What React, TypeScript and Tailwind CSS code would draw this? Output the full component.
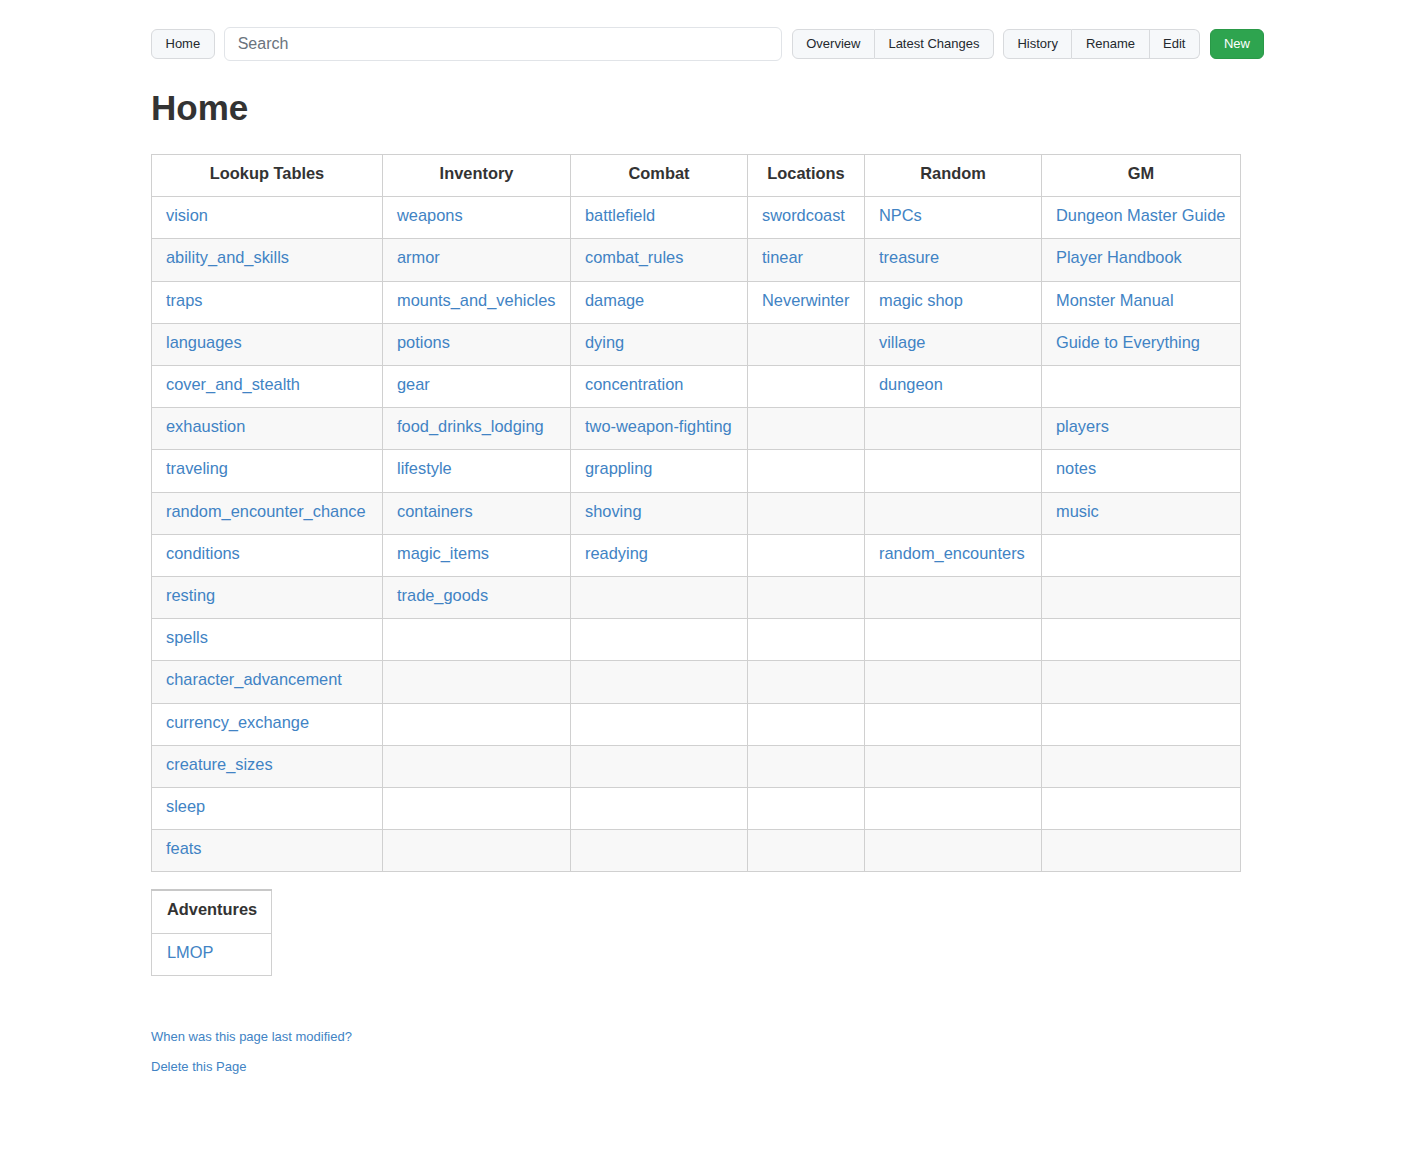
const columns = ["Lookup Tables", "Inventory", "Combat", "Locations", "Random", "GM"];
const widths = ["w-[231px]", "w-[188px]", "w-[177px]", "w-[117px]", "w-[177px]", "w-[199px]"];

const rows: string[][] = [
  ["vision", "weapons", "battlefield", "swordcoast", "NPCs", "Dungeon Master Guide"],
  ["ability_and_skills", "armor", "combat_rules", "tinear", "treasure", "Player Handbook"],
  ["traps", "mounts_and_vehicles", "damage", "Neverwinter", "magic shop", "Monster Manual"],
  ["languages", "potions", "dying", "", "village", "Guide to Everything"],
  ["cover_and_stealth", "gear", "concentration", "", "dungeon", ""],
  ["exhaustion", "food_drinks_lodging", "two-weapon-fighting", "", "", "players"],
  ["traveling", "lifestyle", "grappling", "", "", "notes"],
  ["random_encounter_chance", "containers", "shoving", "", "", "music"],
  ["conditions", "magic_items", "readying", "", "random_encounters", ""],
  ["resting", "trade_goods", "", "", "", ""],
  ["spells", "", "", "", "", ""],
  ["character_advancement", "", "", "", "", ""],
  ["currency_exchange", "", "", "", "", ""],
  ["creature_sizes", "", "", "", "", ""],
  ["sleep", "", "", "", "", ""],
  ["feats", "", "", "", "", ""],
];

const btn =
  "bg-[#f6f8fa] border border-[#d8dadd] text-[13px] leading-5 py-1 px-[13.5px] text-[#24292e]";

const App = () => {
  return (
    <div className="min-h-[1159px] bg-white font-['Liberation_Sans',Arial,sans-serif] text-[#333]">
      <div className="w-[1113px] ml-[151px] pt-[27px]">
        {/* top bar */}
        <div className="flex items-center">
          <button className={`${btn} rounded-md`}>Home</button>
          <div className="flex-1 ml-[9px]">
            <input
              placeholder="Search"
              className="w-full h-[34px] border border-[#e1e4e8] rounded-md px-[13px] text-base leading-5 placeholder:text-[#6a737d] outline-none"
            />
          </div>
          <div className="flex ml-[10px]">
            <button className={`${btn} rounded-l-md`}>Overview</button>
            <button className={`${btn} rounded-r-md border-l-0`}>Latest Changes</button>
          </div>
          <div className="flex ml-[9px]">
            <button className={`${btn} rounded-l-md`}>History</button>
            <button className={`${btn} border-l-0`}>Rename</button>
            <button className={`${btn} rounded-r-md border-l-0`}>Edit</button>
          </div>
          <button className="ml-[10px] bg-[#2ea44f] border border-[#2a9948] text-white text-[13px] leading-5 py-1 px-[13px] rounded-md">
            New
          </button>
        </div>

        <h1 className="mt-[26px] mb-[25px] text-[35px] leading-[42px] font-bold text-[#333]">Home</h1>

        {/* main table */}
        <table className="table-fixed w-[1089px] border-collapse text-[16.4px]">
          <colgroup>
            {widths.map((w, i) => (
              <col key={i} className={w} />
            ))}
          </colgroup>
          <thead>
            <tr>
              {columns.map((c) => (
                <th
                  key={c}
                  className="border border-[#d0d0d0] pt-[6px] pb-[10px] px-[14px] leading-[25.2px] font-bold text-center text-[#333]"
                >
                  {c}
                </th>
              ))}
            </tr>
          </thead>
          <tbody>
            {rows.map((r, i) => (
              <tr key={i} className={i % 2 === 1 ? "bg-[#f8f8f8]" : "bg-white"}>
                {r.map((cell, j) => (
                  <td
                    key={j}
                    className="border border-[#d0d0d0] pt-[6px] pb-[10px] px-[14px] leading-[25.2px] whitespace-nowrap"
                  >
                    {cell && (
                      <a href="#" className="text-[#4183c4]">
                        {cell}
                      </a>
                    )}
                  </td>
                ))}
              </tr>
            ))}
          </tbody>
        </table>

        {/* adventures */}
        <table className="mt-[17px] table-fixed w-[121px] border-collapse text-[16.4px]">
          <thead>
            <tr>
              <th className="border border-[#d0d0d0] border-t-2 border-t-[#c8c8c8] pt-[6px] pb-[10px] px-[15px] leading-[25.2px] font-bold text-left text-[#333] whitespace-nowrap">
                Adventures
              </th>
            </tr>
          </thead>
          <tbody>
            <tr>
              <td className="border border-[#d0d0d0] pt-[6px] pb-[10px] px-[15px] leading-[25.2px]">
                <a href="#" className="text-[#4183c4]">
                  LMOP
                </a>
              </td>
            </tr>
          </tbody>
        </table>

        {/* footer */}
        <div className="mt-[51px] text-[13px] leading-5">
          <p>
            <a href="#" className="text-[#4183c4]">
              When was this page last modified?
            </a>
          </p>
          <p className="mt-[10px]">
            <a href="#" className="text-[#4183c4]">
              Delete this Page
            </a>
          </p>
        </div>
      </div>
    </div>
  );
};

export default App;
